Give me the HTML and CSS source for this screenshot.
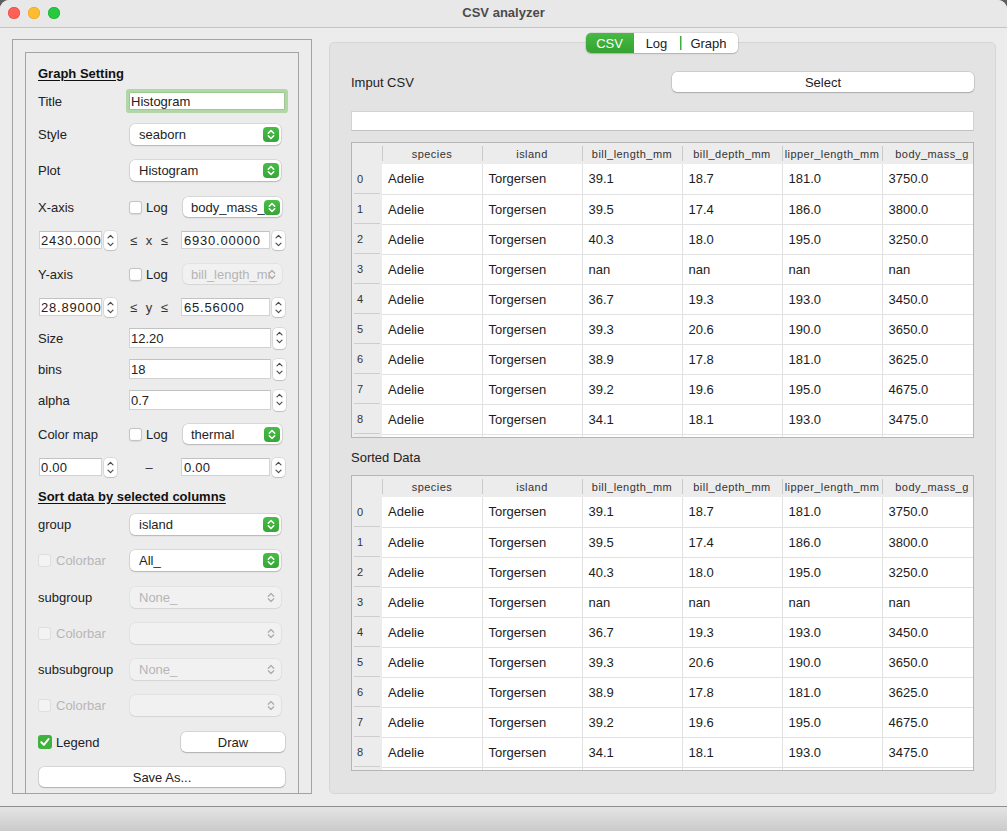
FILE: index.html
```html
<!DOCTYPE html>
<html lang="en">
<head>
<meta charset="utf-8">
<title>CSV analyzer</title>
<link rel="stylesheet" href="styles.css">
</head>
<body>
<div class="window">
  <header class="titlebar">
    <div class="lights"><span class="light red"></span><span class="light yellow"></span><span class="light green"></span></div>
    <div class="title">CSV analyzer</div>
    <div></div>
  </header>

  <main class="main">
    <section class="outer-frame">
      <div class="inner-frame">
        <div class="row heading">Graph Setting</div>

        <div class="row mt4">
          <span class="lbl lbl-91">Title</span>
          <span class="field title-field">Histogram</span>
        </div>

        <div class="row mt9">
          <span class="lbl">Style</span>
          <div class="combo"><span class="combo-text">seaborn</span><span class="combo-btn"><svg width="16" height="15" viewBox="0 0 16 15"><path d="M5.3 6.2 8 3.5l2.7 2.7M5.3 8.8 8 11.5l2.7-2.7" stroke="#fff" stroke-width="1.6" fill="none" stroke-linecap="round" stroke-linejoin="round"/></svg></span></div>
        </div>

        <div class="row mt12">
          <span class="lbl">Plot</span>
          <div class="combo"><span class="combo-text">Histogram</span><span class="combo-btn"><svg width="16" height="15" viewBox="0 0 16 15"><path d="M5.3 6.2 8 3.5l2.7 2.7M5.3 8.8 8 11.5l2.7-2.7" stroke="#fff" stroke-width="1.6" fill="none" stroke-linecap="round" stroke-linejoin="round"/></svg></span></div>
        </div>

        <div class="row mt13">
          <span class="lbl lbl-91">X-axis</span>
          <span class="chk-group"><span class="chk"></span><span class="chk-text">Log</span></span>
          <div class="combo combo-small"><span class="combo-text">body_mass_g</span><span class="combo-btn"><svg width="16" height="15" viewBox="0 0 16 15"><path d="M5.3 6.2 8 3.5l2.7 2.7M5.3 8.8 8 11.5l2.7-2.7" stroke="#fff" stroke-width="1.6" fill="none" stroke-linecap="round" stroke-linejoin="round"/></svg></span></div>
        </div>

        <div class="row mt9">
          <span class="field range-a">2430.000000</span>
          <span class="stepper"><svg width="13" height="19" viewBox="0 0 13 19"><path d="M4 6.8 6.5 4.3 9 6.8M4 12.2l2.5 2.5L9 12.2" stroke="#4d4d4d" stroke-width="1.2" fill="none" stroke-linecap="round" stroke-linejoin="round"/></svg></span>
          <span class="mid">≤ x ≤</span>
          <span class="field range-b">6930.00000</span>
          <span class="stepper"><svg width="13" height="19" viewBox="0 0 13 19"><path d="M4 6.8 6.5 4.3 9 6.8M4 12.2l2.5 2.5L9 12.2" stroke="#4d4d4d" stroke-width="1.2" fill="none" stroke-linecap="round" stroke-linejoin="round"/></svg></span>
        </div>

        <div class="row mt10">
          <span class="lbl lbl-91">Y-axis</span>
          <span class="chk-group"><span class="chk"></span><span class="chk-text">Log</span></span>
          <div class="combo combo-small disabled"><span class="combo-text">bill_length_mm</span><span class="combo-btn"><svg width="16" height="15" viewBox="0 0 16 15"><path d="M5.3 6.2 8 3.5l2.7 2.7M5.3 8.8 8 11.5l2.7-2.7" stroke="#adadad" stroke-width="1.3" fill="none" stroke-linecap="round" stroke-linejoin="round"/></svg></span></div>
        </div>

        <div class="row mt9">
          <span class="field range-a">28.890000</span>
          <span class="stepper"><svg width="13" height="19" viewBox="0 0 13 19"><path d="M4 6.8 6.5 4.3 9 6.8M4 12.2l2.5 2.5L9 12.2" stroke="#4d4d4d" stroke-width="1.2" fill="none" stroke-linecap="round" stroke-linejoin="round"/></svg></span>
          <span class="mid">≤ y ≤</span>
          <span class="field range-b">65.56000</span>
          <span class="stepper"><svg width="13" height="19" viewBox="0 0 13 19"><path d="M4 6.8 6.5 4.3 9 6.8M4 12.2l2.5 2.5L9 12.2" stroke="#4d4d4d" stroke-width="1.2" fill="none" stroke-linecap="round" stroke-linejoin="round"/></svg></span>
        </div>

        <div class="row mt7">
          <span class="lbl lbl-91">Size</span>
          <span class="field num-field">12.20</span>
          <span class="stepper"><svg width="13" height="19" viewBox="0 0 13 19"><path d="M4 6.8 6.5 4.3 9 6.8M4 12.2l2.5 2.5L9 12.2" stroke="#4d4d4d" stroke-width="1.2" fill="none" stroke-linecap="round" stroke-linejoin="round"/></svg></span>
        </div>

        <div class="row mt7">
          <span class="lbl lbl-91">bins</span>
          <span class="field num-field">18</span>
          <span class="stepper"><svg width="13" height="19" viewBox="0 0 13 19"><path d="M4 6.8 6.5 4.3 9 6.8M4 12.2l2.5 2.5L9 12.2" stroke="#4d4d4d" stroke-width="1.2" fill="none" stroke-linecap="round" stroke-linejoin="round"/></svg></span>
        </div>

        <div class="row mt7">
          <span class="lbl lbl-91">alpha</span>
          <span class="field num-field">0.7</span>
          <span class="stepper"><svg width="13" height="19" viewBox="0 0 13 19"><path d="M4 6.8 6.5 4.3 9 6.8M4 12.2l2.5 2.5L9 12.2" stroke="#4d4d4d" stroke-width="1.2" fill="none" stroke-linecap="round" stroke-linejoin="round"/></svg></span>
        </div>

        <div class="row mt10">
          <span class="lbl lbl-91">Color map</span>
          <span class="chk-group"><span class="chk"></span><span class="chk-text">Log</span></span>
          <div class="combo combo-small"><span class="combo-text">thermal</span><span class="combo-btn"><svg width="16" height="15" viewBox="0 0 16 15"><path d="M5.3 6.2 8 3.5l2.7 2.7M5.3 8.8 8 11.5l2.7-2.7" stroke="#fff" stroke-width="1.6" fill="none" stroke-linecap="round" stroke-linejoin="round"/></svg></span></div>
        </div>

        <div class="row mt9">
          <span class="field range-a plain">0.00</span>
          <span class="stepper"><svg width="13" height="19" viewBox="0 0 13 19"><path d="M4 6.8 6.5 4.3 9 6.8M4 12.2l2.5 2.5L9 12.2" stroke="#4d4d4d" stroke-width="1.2" fill="none" stroke-linecap="round" stroke-linejoin="round"/></svg></span>
          <span class="mid">–</span>
          <span class="field range-b plain">0.00</span>
          <span class="stepper"><svg width="13" height="19" viewBox="0 0 13 19"><path d="M4 6.8 6.5 4.3 9 6.8M4 12.2l2.5 2.5L9 12.2" stroke="#4d4d4d" stroke-width="1.2" fill="none" stroke-linecap="round" stroke-linejoin="round"/></svg></span>
        </div>

        <div class="row heading mt5">Sort data by selected columns</div>

        <div class="row mt4">
          <span class="lbl">group</span>
          <div class="combo"><span class="combo-text">island</span><span class="combo-btn"><svg width="16" height="15" viewBox="0 0 16 15"><path d="M5.3 6.2 8 3.5l2.7 2.7M5.3 8.8 8 11.5l2.7-2.7" stroke="#fff" stroke-width="1.6" fill="none" stroke-linecap="round" stroke-linejoin="round"/></svg></span></div>
        </div>

        <div class="row mt12">
          <span class="lbl chk-lbl disabled-text"><span class="chk dis"></span><span class="chk-text">Colorbar</span></span>
          <div class="combo"><span class="combo-text">All_</span><span class="combo-btn"><svg width="16" height="15" viewBox="0 0 16 15"><path d="M5.3 6.2 8 3.5l2.7 2.7M5.3 8.8 8 11.5l2.7-2.7" stroke="#fff" stroke-width="1.6" fill="none" stroke-linecap="round" stroke-linejoin="round"/></svg></span></div>
        </div>

        <div class="row mt13">
          <span class="lbl">subgroup</span>
          <div class="combo disabled"><span class="combo-text">None_</span><span class="combo-btn"><svg width="16" height="15" viewBox="0 0 16 15"><path d="M5.3 6.2 8 3.5l2.7 2.7M5.3 8.8 8 11.5l2.7-2.7" stroke="#adadad" stroke-width="1.3" fill="none" stroke-linecap="round" stroke-linejoin="round"/></svg></span></div>
        </div>

        <div class="row mt12">
          <span class="lbl chk-lbl disabled-text"><span class="chk dis"></span><span class="chk-text">Colorbar</span></span>
          <div class="combo disabled"><span class="combo-text"></span><span class="combo-btn"><svg width="16" height="15" viewBox="0 0 16 15"><path d="M5.3 6.2 8 3.5l2.7 2.7M5.3 8.8 8 11.5l2.7-2.7" stroke="#adadad" stroke-width="1.3" fill="none" stroke-linecap="round" stroke-linejoin="round"/></svg></span></div>
        </div>

        <div class="row mt12">
          <span class="lbl">subsubgroup</span>
          <div class="combo disabled"><span class="combo-text">None_</span><span class="combo-btn"><svg width="16" height="15" viewBox="0 0 16 15"><path d="M5.3 6.2 8 3.5l2.7 2.7M5.3 8.8 8 11.5l2.7-2.7" stroke="#adadad" stroke-width="1.3" fill="none" stroke-linecap="round" stroke-linejoin="round"/></svg></span></div>
        </div>

        <div class="row mt12">
          <span class="lbl chk-lbl disabled-text"><span class="chk dis"></span><span class="chk-text">Colorbar</span></span>
          <div class="combo disabled"><span class="combo-text"></span><span class="combo-btn"><svg width="16" height="15" viewBox="0 0 16 15"><path d="M5.3 6.2 8 3.5l2.7 2.7M5.3 8.8 8 11.5l2.7-2.7" stroke="#adadad" stroke-width="1.3" fill="none" stroke-linecap="round" stroke-linejoin="round"/></svg></span></div>
        </div>

        <div class="row mt13">
          <span class="legend-group"><span class="chk checked"><svg width="14" height="14" viewBox="0 0 14 14"><path d="M3.3 7.3 5.9 9.9 10.6 4" stroke="#fff" stroke-width="2" fill="none" stroke-linecap="round" stroke-linejoin="round"/></svg></span><span class="chk-text">Legend</span></span>
          <button class="btn draw-btn">Draw</button>
        </div>

        <div class="row mt11">
          <button class="btn save-btn">Save As...</button>
        </div>
      </div>
    </section>

    <section class="tabs-area">
      <nav class="tabbar">
        <span class="tab active">CSV</span>
        <span class="tab">Log</span>
        <span class="tab tab-sep">Graph</span>
      </nav>
      <div class="pane">
        <div class="input-row">
          <span class="pane-label">Imput CSV</span>
          <button class="btn select-btn">Select</button>
        </div>
        <div class="path-field"></div>

        <div class="table-box">
          <table class="grid">
            <colgroup><col class="c-rh"><col class="c-d"><col class="c-d"><col class="c-d"><col class="c-d"><col class="c-d"><col class="c-d"></colgroup>
            <thead><tr><th class="corner"></th><th>species</th><th>island</th><th>bill_length_mm</th><th>bill_depth_mm</th><th>lipper_length_mm</th><th>body_mass_g</th></tr></thead>
            <tbody>
              <tr><th class="rh">0</th><td>Adelie</td><td>Torgersen</td><td>39.1</td><td>18.7</td><td>181.0</td><td>3750.0</td></tr>
              <tr><th class="rh">1</th><td>Adelie</td><td>Torgersen</td><td>39.5</td><td>17.4</td><td>186.0</td><td>3800.0</td></tr>
              <tr><th class="rh">2</th><td>Adelie</td><td>Torgersen</td><td>40.3</td><td>18.0</td><td>195.0</td><td>3250.0</td></tr>
              <tr><th class="rh">3</th><td>Adelie</td><td>Torgersen</td><td>nan</td><td>nan</td><td>nan</td><td>nan</td></tr>
              <tr><th class="rh">4</th><td>Adelie</td><td>Torgersen</td><td>36.7</td><td>19.3</td><td>193.0</td><td>3450.0</td></tr>
              <tr><th class="rh">5</th><td>Adelie</td><td>Torgersen</td><td>39.3</td><td>20.6</td><td>190.0</td><td>3650.0</td></tr>
              <tr><th class="rh">6</th><td>Adelie</td><td>Torgersen</td><td>38.9</td><td>17.8</td><td>181.0</td><td>3625.0</td></tr>
              <tr><th class="rh">7</th><td>Adelie</td><td>Torgersen</td><td>39.2</td><td>19.6</td><td>195.0</td><td>4675.0</td></tr>
              <tr><th class="rh">8</th><td>Adelie</td><td>Torgersen</td><td>34.1</td><td>18.1</td><td>193.0</td><td>3475.0</td></tr>
              <tr><th class="rh"></th><td></td><td></td><td></td><td></td><td></td><td></td></tr>
            </tbody>
          </table>
        </div>

        <div class="sorted-row"><span class="pane-label">Sorted Data</span></div>

        <div class="table-box">
          <table class="grid">
            <colgroup><col class="c-rh"><col class="c-d"><col class="c-d"><col class="c-d"><col class="c-d"><col class="c-d"><col class="c-d"></colgroup>
            <thead><tr><th class="corner"></th><th>species</th><th>island</th><th>bill_length_mm</th><th>bill_depth_mm</th><th>lipper_length_mm</th><th>body_mass_g</th></tr></thead>
            <tbody>
              <tr><th class="rh">0</th><td>Adelie</td><td>Torgersen</td><td>39.1</td><td>18.7</td><td>181.0</td><td>3750.0</td></tr>
              <tr><th class="rh">1</th><td>Adelie</td><td>Torgersen</td><td>39.5</td><td>17.4</td><td>186.0</td><td>3800.0</td></tr>
              <tr><th class="rh">2</th><td>Adelie</td><td>Torgersen</td><td>40.3</td><td>18.0</td><td>195.0</td><td>3250.0</td></tr>
              <tr><th class="rh">3</th><td>Adelie</td><td>Torgersen</td><td>nan</td><td>nan</td><td>nan</td><td>nan</td></tr>
              <tr><th class="rh">4</th><td>Adelie</td><td>Torgersen</td><td>36.7</td><td>19.3</td><td>193.0</td><td>3450.0</td></tr>
              <tr><th class="rh">5</th><td>Adelie</td><td>Torgersen</td><td>39.3</td><td>20.6</td><td>190.0</td><td>3650.0</td></tr>
              <tr><th class="rh">6</th><td>Adelie</td><td>Torgersen</td><td>38.9</td><td>17.8</td><td>181.0</td><td>3625.0</td></tr>
              <tr><th class="rh">7</th><td>Adelie</td><td>Torgersen</td><td>39.2</td><td>19.6</td><td>195.0</td><td>4675.0</td></tr>
              <tr><th class="rh">8</th><td>Adelie</td><td>Torgersen</td><td>34.1</td><td>18.1</td><td>193.0</td><td>3475.0</td></tr>
              <tr><th class="rh"></th><td></td><td></td><td></td><td></td><td></td><td></td></tr>
            </tbody>
          </table>
        </div>
      </div>
    </section>
  </main>

  <footer class="statusbar"></footer>
</div>
</body>
</html>
```

FILE: styles.css
```css
* { box-sizing: border-box; }

html, body {
  margin: 0;
  padding: 0;
  background: #5e5e5e;
}

body {
  font-family: "Liberation Sans", Arial, sans-serif;
  font-size: 13px;
  color: #222;
}

.window {
  width: 1007px;
  height: 831px;
  background: #ececec;
  border-radius: 9px 9px 0 0;
  overflow: hidden;
  display: flex;
  flex-direction: column;
}

/* title bar */
.titlebar {
  height: 28px;
  flex: none;
  background: #e8e8e8;
  border-bottom: 1px solid #c4c4c4;
  display: grid;
  grid-template-columns: 1fr auto 1fr;
  align-items: center;
}
.lights {
  display: flex;
  gap: 8px;
  padding-left: 8px;
  padding-bottom: 1px;
}
.light {
  width: 12px;
  height: 12px;
  border-radius: 50%;
}
.red { background: #fe5f57; box-shadow: inset 0 0 0 0.5px #e2463f; }
.yellow { background: #febc2e; box-shadow: inset 0 0 0 0.5px #e1a116; }
.green { background: #28c840; box-shadow: inset 0 0 0 0.5px #14ae2b; }
.title {
  font-weight: bold;
  color: #4b4b4b;
  font-size: 13px;
  padding-bottom: 2px;
}

/* main area */
.main {
  height: 778px;
  flex: none;
  display: flex;
  padding: 5px 11px 0 12px;
}

.outer-frame {
  margin-top: 6px;
  width: 300px;
  height: 755px;
  border: 1px solid #a3a3a3;
  padding: 12px 12px 0 12px;
  display: flex;
  flex-direction: column;
}
.inner-frame {
  flex: 1;
  border: 1px solid #a3a3a3;
  border-bottom: none;
  padding: 8px 0 0 12px;
  display: flex;
  flex-direction: column;
  overflow: hidden;
}

.row {
  height: 24px;
  flex: none;
  display: flex;
  align-items: center;
  white-space: nowrap;
}
.mt4 { margin-top: 4px; }
.mt5 { margin-top: 5px; }
.mt7 { margin-top: 7px; }
.mt9 { margin-top: 9px; }
.mt10 { margin-top: 10px; }
.mt11 { margin-top: 11px; }
.mt12 { margin-top: 12px; }
.mt13 { margin-top: 13px; }

.heading {
  font-weight: bold;
  text-decoration: underline;
  text-underline-offset: 2px;
  color: #111;
}

.lbl {
  width: 92px;
  flex: none;
  color: #222;
}
.lbl-91 { width: 91px; }

.disabled-text { color: #b7b7b7; }

/* line edits */
.field {
  height: 18px;
  background: #fff;
  border: 1px solid #d2d2d2;
  border-top-color: #c2c2c2;
  display: flex;
  align-items: center;
  padding-left: 1px;
  overflow: hidden;
  white-space: nowrap;
  flex: none;
}
.title-field {
  width: 156px;
  box-shadow: 0 0 0 3px #b2d7a7;
  border-color: #9cc990;
  border-radius: 1px;
}
.num-field {
  width: 142px;
  height: 20px;
}
.range-a {
  width: 63px;
  margin-left: 1px;
  letter-spacing: 0.8px;
}
.range-b {
  width: 89px;
  padding-left: 2px;
  letter-spacing: 0.8px;
}
.plain { letter-spacing: 0.2px; }

.stepper {
  width: 13px;
  height: 19px;
  margin-left: 2px;
  background: #fff;
  border-radius: 4px;
  box-shadow: 0 0 0 0.5px rgba(0,0,0,0.15), 0 1px 1px rgba(0,0,0,0.12);
  flex: none;
  display: flex;
}
.num-field + .stepper { height: 21px; }

.mid {
  width: 64px;
  text-align: center;
  word-spacing: 5px;
  flex: none;
  color: #333;
}

/* combo boxes */
.combo {
  width: 151px;
  height: 21px;
  background: #fff;
  border-radius: 5px;
  box-shadow: 0 0 0 0.5px rgba(0,0,0,0.16), 0 1px 1.5px rgba(0,0,0,0.16);
  display: flex;
  align-items: center;
  padding-left: 9px;
  flex: none;
  overflow: hidden;
}
.combo-small {
  width: 99px;
  height: 20px;
  padding-left: 8px;
}
.combo-text {
  flex: 1;
  min-width: 0;
  overflow: hidden;
  white-space: nowrap;
  color: #1e1e1e;
}
.combo-btn {
  width: 16px;
  height: 15px;
  margin: 0 2px 0 -6px;
  border-radius: 4px;
  background: linear-gradient(#49bc47, #35a635);
  display: flex;
  flex: none;
}
.combo.disabled {
  background: #f1f1f1;
  box-shadow: 0 0 0 0.5px rgba(0,0,0,0.08), 0 1px 1px rgba(0,0,0,0.06);
}
.combo.disabled .combo-text { color: #b5b5b5; }
.combo.disabled .combo-btn { background: transparent; }

/* checkboxes */
.chk-group {
  width: 54px;
  display: flex;
  align-items: center;
  flex: none;
}
.chk {
  width: 13px;
  height: 13px;
  border-radius: 3px;
  background: #fff;
  box-shadow: inset 0 0 0 1px #c4c4c4, 0 0.5px 1px rgba(0,0,0,0.08);
  flex: none;
  display: flex;
}
.chk.dis {
  background: #f3f3f3;
  box-shadow: inset 0 0 0 1px #dedede;
}
.chk.checked {
  width: 14px;
  height: 14px;
  background: #3eb23b;
  box-shadow: none;
}
.chk-text { margin-left: 4px; }
.chk-lbl {
  display: flex;
  align-items: center;
}
.chk-lbl .chk-text { margin-left: 5px; }

.legend-group {
  width: 143px;
  display: flex;
  align-items: center;
  flex: none;
}
.legend-group .chk-text { margin-left: 4px; color: #222; }

/* buttons */
.btn {
  font-family: inherit;
  font-size: 13px;
  color: #222;
  height: 20px;
  background: #fff;
  border: none;
  border-radius: 5px;
  box-shadow: 0 0 0 0.5px rgba(0,0,0,0.18), 0 1px 1.5px rgba(0,0,0,0.18);
  padding: 0;
  flex: none;
}
.draw-btn { width: 104px; }
.save-btn { width: 246px; margin-left: 1px; }

/* right side */
.tabs-area {
  margin-left: 17px;
  width: 667px;
  display: flex;
  flex-direction: column;
  align-items: center;
}
.tabbar {
  position: relative;
  z-index: 1;
  height: 20px;
  display: flex;
  background: #fff;
  border-radius: 5px;
  box-shadow: 0 0 0 0.5px rgba(0,0,0,0.14), 0 1px 1.5px rgba(0,0,0,0.16);
  overflow: hidden;
  margin-right: 2px;
}
.tab {
  height: 20px;
  display: flex;
  align-items: center;
  justify-content: center;
  color: #222;
}
.tab:nth-child(1) { width: 48px; }
.tab:nth-child(2) { width: 46px; }
.tab:nth-child(3) { width: 58px; }
.tab.active {
  background: linear-gradient(#48b943, #34a331);
  color: #fff;
}
.tab-sep {
  background: linear-gradient(#3cae39, #3cae39) no-repeat 0 3px / 1.5px 14px;
}

.pane {
  width: 667px;
  height: 752px;
  margin-top: -11px;
  background: #e3e3e3;
  border: 1px solid #d6d6d6;
  border-radius: 5px;
  padding: 29px 21px 0 21px;
  display: flex;
  flex-direction: column;
}
.input-row {
  height: 20px;
  display: flex;
  align-items: center;
  justify-content: space-between;
  flex: none;
}
.pane-label { color: #222; }
.select-btn { width: 302px; }
.path-field {
  margin-top: 19px;
  height: 20px;
  background: #fff;
  border: 1px solid #d3d3d3;
  border-bottom-color: #c2c2c2;
  flex: none;
}
.table-box {
  margin-top: 11px;
  height: 296px;
  flex: none;
  border: 1px solid #b6b6b6;
  background: #fff;
  overflow: hidden;
}
.sorted-row {
  margin-top: 9px;
  height: 20px;
  display: flex;
  align-items: center;
  flex: none;
}
.sorted-row + .table-box { margin-top: 8px; }

.grid {
  width: 630px;
  table-layout: fixed;
  border-collapse: collapse;
  font-size: 13px;
}
.c-rh { width: 30px; }
.c-d { width: 100px; }

.grid thead th {
  height: 21px;
  padding: 0;
  font-weight: normal;
  font-size: 11px;
  letter-spacing: 0.45px;
  color: #333;
  text-align: center;
  white-space: nowrap;
  overflow: hidden;
  background: #ececec linear-gradient(#c9c9c9, #c9c9c9) no-repeat 0 3px / 1px 15px;
}
.grid thead th.corner { background: #ececec; }

.grid tbody td {
  height: 30px;
  padding: 0 0 0 6px;
  border-right: 1px solid #e2e2e2;
  border-bottom: 1px solid #e2e2e2;
  white-space: nowrap;
  overflow: hidden;
  color: #1c1c1c;
}
.grid tbody th.rh {
  height: 30px;
  padding: 0 0 0 5px;
  font-weight: normal;
  font-size: 11px;
  text-align: left;
  color: #333;
  background: #ececec linear-gradient(#cdcdcd, #cdcdcd) no-repeat 2px 100% / 26px 1px;
}

/* status bar */
.statusbar {
  flex: 1;
  border-top: 1px solid #8e8e8e;
  background: linear-gradient(#e4e4e4, #cbcbcb);
}
```
